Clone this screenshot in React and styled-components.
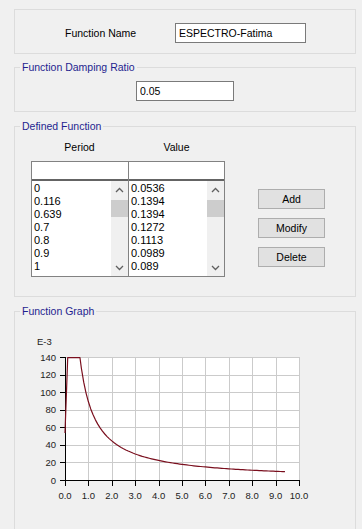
import React from "react";
import styled, { createGlobalStyle } from "styled-components";

const Global = createGlobalStyle`
  html, body { margin: 0; padding: 0; background: #f0f0f0; }
  body { font-family: "Liberation Sans", Arial, sans-serif; font-size: 10.5px; color: #000; }
  * { box-sizing: border-box; }
`;

const Page = styled.div`
  width: 362px;
  height: 529px;
  overflow: hidden;
  padding: 9px 6px 0 14px;
  display: flex;
  flex-direction: column;
`;

const Group = styled.fieldset`
  margin: ${(p) => p.$mt || 0}px 0 0 0;
  min-width: 0;
  border: 1px solid #dcdcdc;
  padding: 0;
  flex-shrink: 0;
`;

const Legend = styled.legend`
  margin-left: 5px;
  padding: 0 2px;
  font-size: 10.5px;
  line-height: 13px;
  color: #1f1f8f;
`;

const Body = styled.div`
  padding: ${(p) => p.$pad || "0"};
`;

const NameRow = styled.div`
  display: flex;
  align-items: center;
`;

const Label = styled.span`
  width: 110px;
  line-height: 13px;
`;

const TextBox = styled.input`
  width: ${(p) => p.$w}px;
  height: 20px;
  border: 1px solid #7a7a7a;
  background: #fff;
  padding: 0 3px;
  font: inherit;
  font-size: 10.5px;
  color: #000;
  outline: none;
  margin: 0;
`;

const Center = styled.div`
  display: flex;
  justify-content: center;
`;

const DefRow = styled.div`
  display: flex;
  align-items: flex-start;
`;

const TableBlock = styled.div`
  display: flex;
  flex-direction: column;
`;

const Headers = styled.div`
  display: grid;
  grid-template-columns: 97px 97px;
  margin-bottom: 7px;
`;

const HeaderText = styled.div`
  text-align: center;
  line-height: 13px;
`;

const Table = styled.div`
  display: flex;
  border: 1px solid #828282;
  background: #fff;
`;

const Column = styled.div`
  width: ${(p) => p.$w}px;
  display: flex;
  flex-direction: column;
  border-right: ${(p) => (p.$last ? "none" : "1px solid #828282")};
`;

const HeadCell = styled.div`
  height: 19px;
  border-bottom: 2px solid #646464;
  background: #fff;
`;

const ListArea = styled.div`
  height: 95px;
  display: flex;
`;

const Items = styled.div`
  flex: 1;
  padding: 1px 0 0 2px;
  font-size: 11px;
  line-height: 13px;
  overflow: hidden;
`;

const ScrollBar = styled.div`
  width: 17px;
  background: #f0f0f0;
  display: flex;
  flex-direction: column;
`;

const Arrow = styled.div`
  height: 17px;
  display: flex;
  align-items: center;
  justify-content: center;
`;

const Track = styled.div`
  flex: 1;
  padding-top: 2px;
`;

const Thumb = styled.div`
  height: 17px;
  background: #cdcdcd;
`;

const ButtonCol = styled.div`
  display: flex;
  flex-direction: column;
  gap: 9px;
  margin-left: 33px;
  padding-top: 48px;
`;

const Button = styled.button`
  width: 67px;
  height: 20px;
  background: #e1e1e1;
  border: 1px solid #adadad;
  font: inherit;
  font-size: 10.5px;
  color: #000;
  padding: 0;
  margin: 0;
`;

const ChartSvg = styled.svg`
  display: block;
`;

const Chevron = ({ down }) => (
  <svg width="9" height="6" viewBox="0 0 9 6">
    <path
      d={down ? "M1 1 L4.5 4.5 L8 1" : "M1 5 L4.5 1.5 L8 5"}
      fill="none"
      stroke="#606060"
      strokeWidth="1.3"
    />
  </svg>
);

const periods = ["0", "0.116", "0.639", "0.7", "0.8", "0.9", "1"];
const values = ["0.0536", "0.1394", "0.1394", "0.1272", "0.1113", "0.0989", "0.089"];

const ListColumn = ({ w, items, last }) => (
  <Column $w={w} $last={last}>
    <HeadCell />
    <ListArea>
      <Items>
        {items.map((t, i) => (
          <div key={i}>{t}</div>
        ))}
      </Items>
      <ScrollBar>
        <Arrow>
          <Chevron />
        </Arrow>
        <Track>
          <Thumb />
        </Track>
        <Arrow>
          <Chevron down />
        </Arrow>
      </ScrollBar>
    </ListArea>
  </Column>
);

const X0 = 65, X1 = 299, Y0 = 480, Y1 = 357;
const sx = (t) => X0 + (t / 10) * (X1 - X0);
const sy = (v) => Y0 - (v / 0.14) * (Y0 - Y1);

function curvePoints() {
  const pts = [
    [0, 0.0536],
    [0.116, 0.1394],
    [0.639, 0.1394],
    [0.7, 0.1272],
    [0.8, 0.1113],
    [0.9, 0.0989],
    [1, 0.089],
  ];
  for (let t = 1.1; t <= 9.401; t += 0.1) pts.push([t, 0.089 / t]);
  return pts.map(([t, v]) => `${sx(t).toFixed(2)},${sy(v).toFixed(2)}`).join(" ");
}

const Chart = () => {
  const xs = Array.from({ length: 11 }, (_, k) => k);
  const ys = Array.from({ length: 8 }, (_, k) => k * 20);
  return (
    <ChartSvg width="340" height="210" viewBox="15 320 340 210">
      <rect x={X0} y={Y1} width={X1 - X0} height={Y0 - Y1} fill="#fff" />
      {xs.map((k) => {
        const x = Math.round(sx(k)) + 0.5;
        return <line key={"gx" + k} x1={x} y1={Y1} x2={x} y2={Y0} stroke="#cbcbcb" strokeWidth="1" />;
      })}
      {ys.map((v) => {
        const y = Math.round(sy(v / 1000)) + 0.5;
        return <line key={"gy" + v} x1={X0} y1={y} x2={X1} y2={y} stroke="#cbcbcb" strokeWidth="1" />;
      })}
      <line x1={X0 + 0.5} y1={Y1} x2={X0 + 0.5} y2={Y0 + 6} stroke="#000" strokeWidth="1" />
      <line x1={X0 - 5} y1={Y0 + 0.5} x2={X1 + 1} y2={Y0 + 0.5} stroke="#000" strokeWidth="1" />
      {ys.map((v) => {
        const y = Math.round(sy(v / 1000)) + 0.5;
        return <line key={"ty" + v} x1={X0 - 5} y1={y} x2={X0} y2={y} stroke="#000" strokeWidth="1" />;
      })}
      {xs.map((k) => {
        const x = Math.round(sx(k)) + 0.5;
        return <line key={"tx" + k} x1={x} y1={Y0} x2={x} y2={Y0 + 6} stroke="#000" strokeWidth="1" />;
      })}
      <g fontFamily="Liberation Sans, Arial, sans-serif" fontSize="9.5" fill="#222">
        <text x="37" y="344.5">E-3</text>
        {ys.map((v) => (
          <text key={"ly" + v} x="56" y={sy(v / 1000) + 3.5} textAnchor="end">
            {v}
          </text>
        ))}
        {xs.map((k) => (
          <text key={"lx" + k} x={sx(k)} y="498.5" textAnchor="middle">
            {k.toFixed(1)}
          </text>
        ))}
      </g>
      <polyline points={curvePoints()} fill="none" stroke="#7a0f1e" strokeWidth="1.2" strokeLinejoin="round" />
    </ChartSvg>
  );
};

export default function App() {
  return (
    <>
      <Global />
      <Page>
        <Group>
          <Body $pad="13px 0 10px 50px">
            <NameRow>
              <Label>Function Name</Label>
              <TextBox $w={131} defaultValue="ESPECTRO-Fatima" readOnly />
            </NameRow>
          </Body>
        </Group>

        <Group $mt={7}>
          <Legend>Function Damping Ratio</Legend>
          <Body $pad="7px 0 10px 0">
            <Center>
              <TextBox $w={98} defaultValue="0.05" readOnly />
            </Center>
          </Body>
        </Group>

        <Group $mt={8}>
          <Legend>Defined Function</Legend>
          <Body $pad="8px 0 19px 16px">
            <DefRow>
              <TableBlock>
                <Headers>
                  <HeaderText>Period</HeaderText>
                  <HeaderText>Value</HeaderText>
                </Headers>
                <Table>
                  <ListColumn w={97} items={periods} />
                  <ListColumn w={95} items={values} last />
                </Table>
              </TableBlock>
              <ButtonCol>
                <Button>Add</Button>
                <Button>Modify</Button>
                <Button>Delete</Button>
              </ButtonCol>
            </DefRow>
          </Body>
        </Group>

        <Group $mt={8}>
          <Legend>Function Graph</Legend>
          <Body $pad="2px 0 20px 0">
            <Chart />
          </Body>
        </Group>
      </Page>
    </>
  );
}
